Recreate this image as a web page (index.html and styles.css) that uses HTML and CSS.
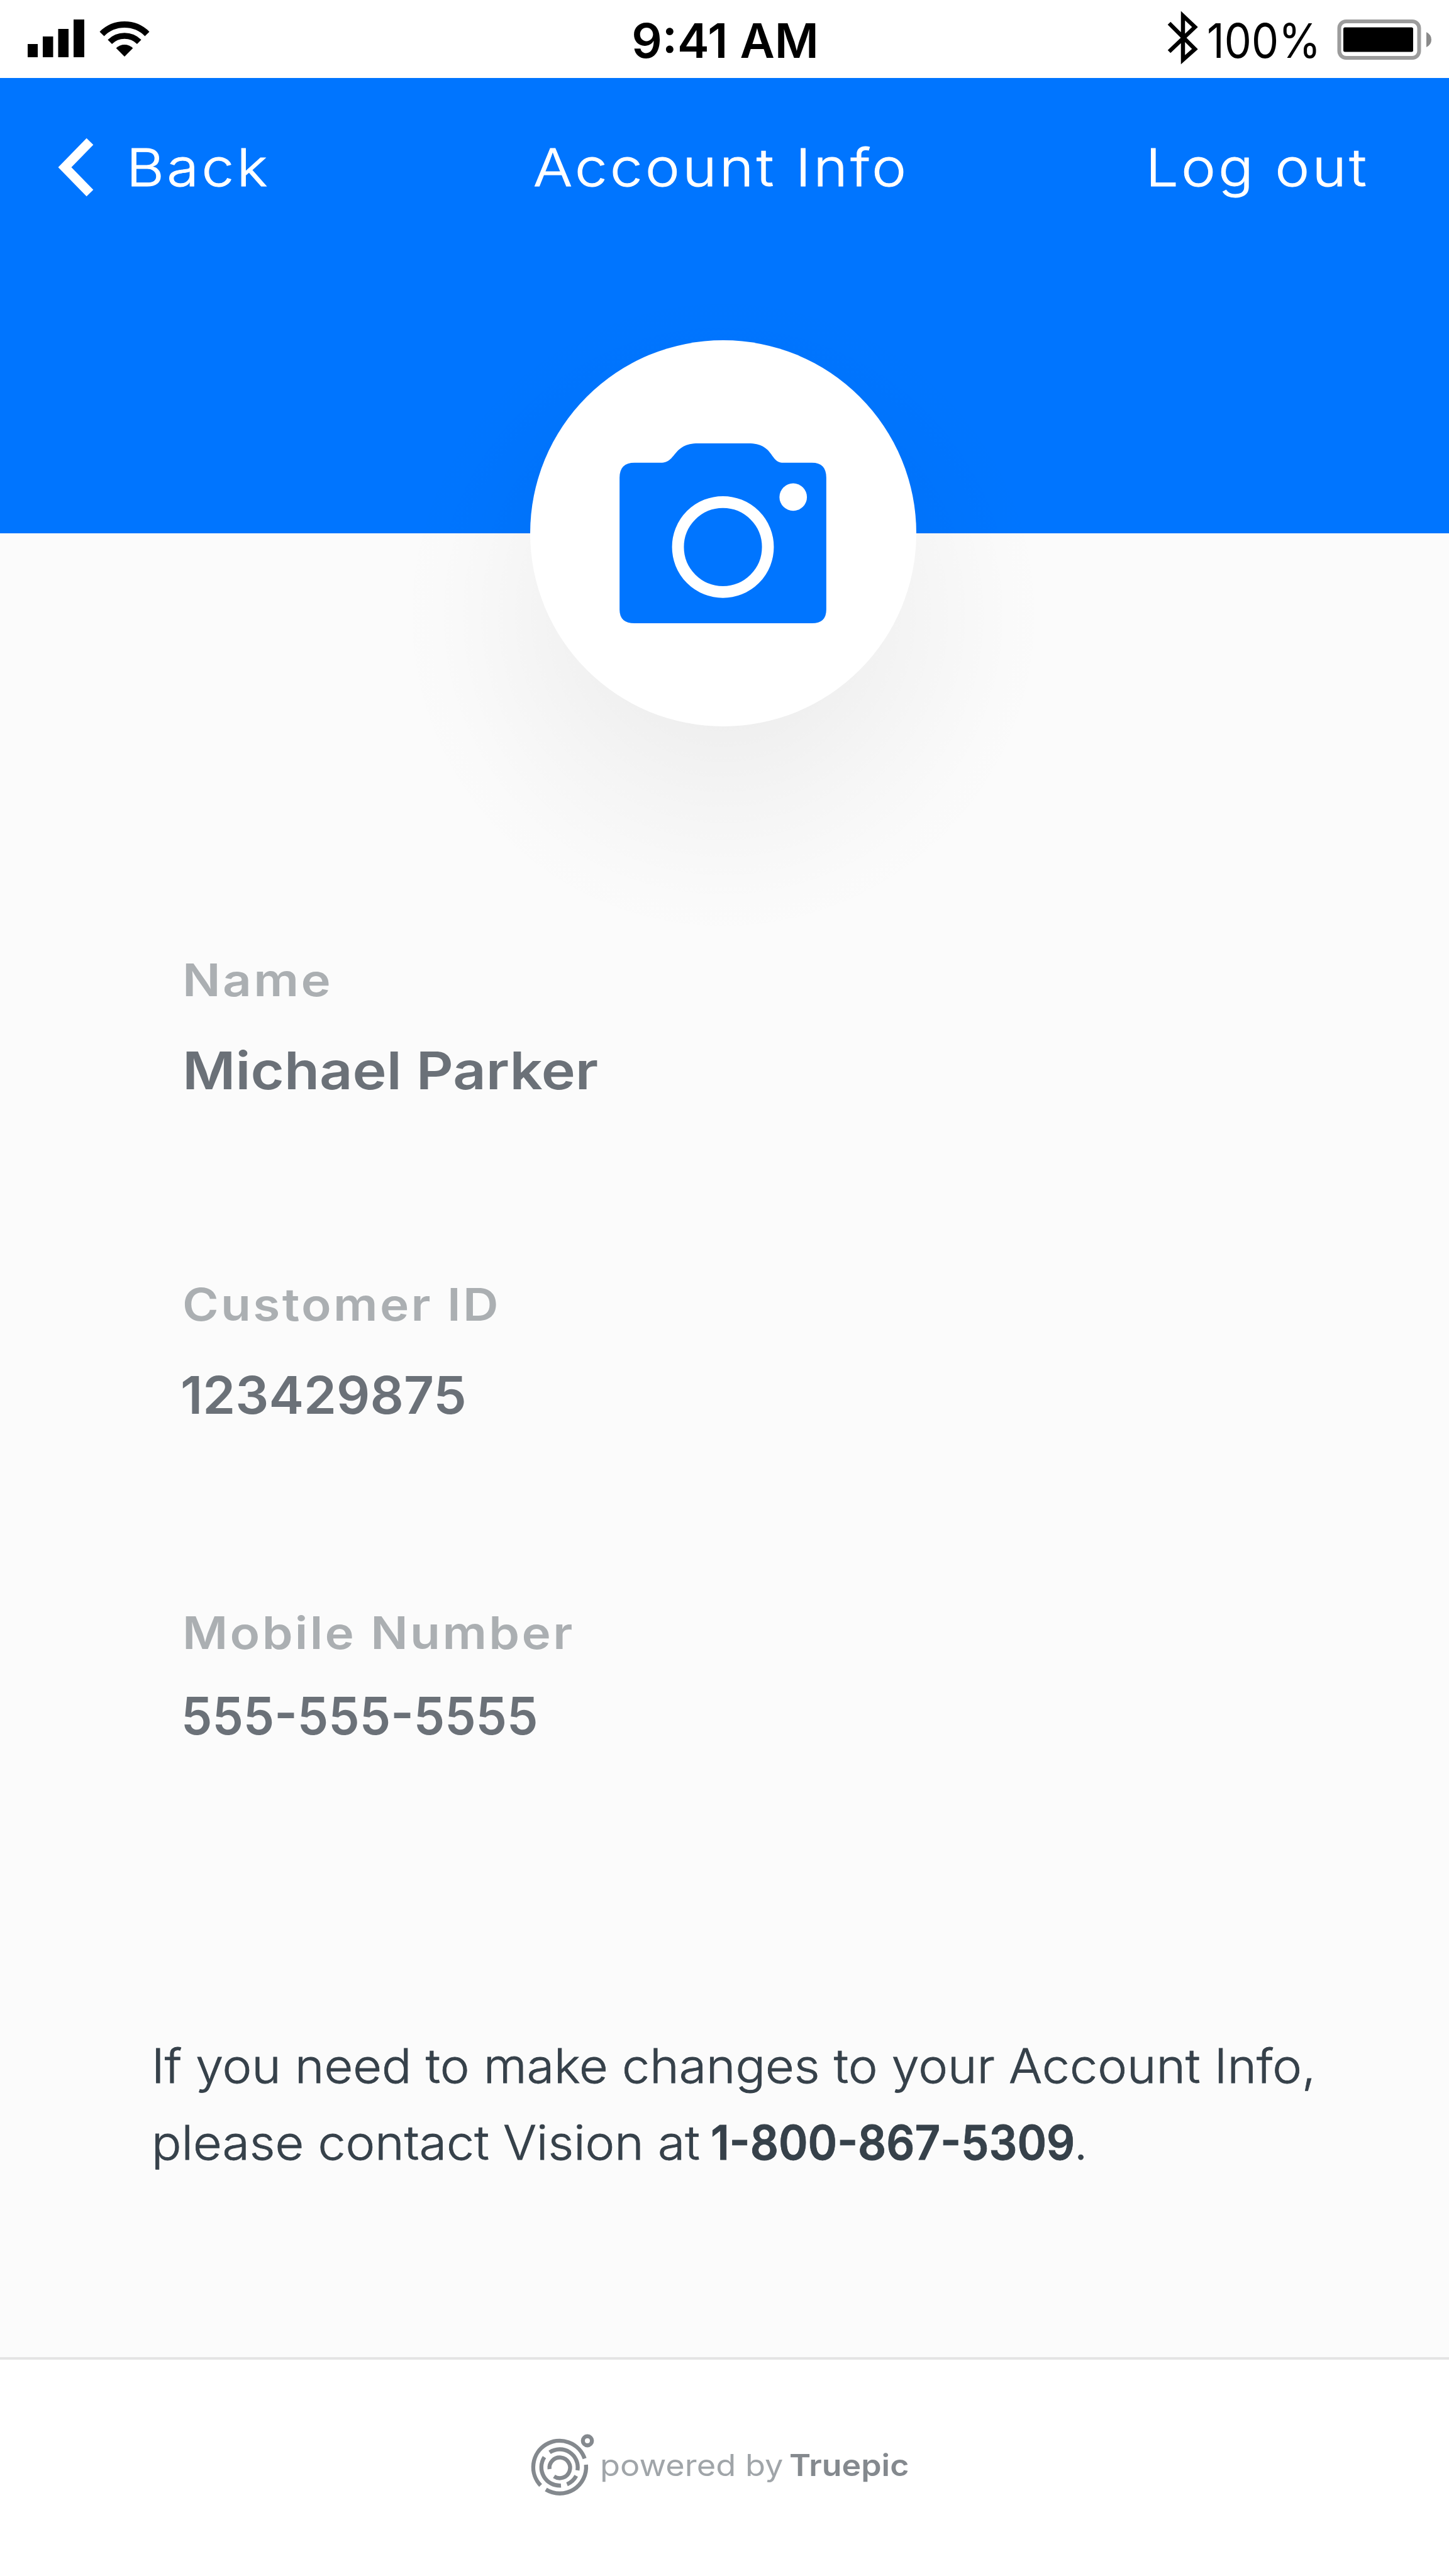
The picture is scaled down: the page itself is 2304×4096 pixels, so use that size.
FILE: index.html
```
<!DOCTYPE html>
<html lang="en">
<head>
<meta charset="utf-8">
<title>Account Info</title>
<link rel="stylesheet" href="styles.css">
</head>
<body>
<div class="screen">
  <div class="status-bar">
    <svg class="signal" viewBox="0 0 200 72" width="200" height="72">
      <path d="M0 46h16v21H0zM24 34h16.500v33H24zM48.500 22h16.500v45H48.500zM73 7h17v60H73z"/>
      <g fill="none" stroke="#000" stroke-width="10">
        <path d="M118 30A51 51 0 0 1 190 30"/>
        <path d="M130.700 42.700A33 33 0 0 1 177.300 42.700" stroke-width="9.500"/>
      </g>
      <path d="M154 66L140.600 52.600A19 19 0 0 1 167.400 52.600Z"/>
    </svg>
    <div class="time"><span class="fit fit-time">9:41 AM</span></div>
    <div class="power">
      <svg class="bluetooth" viewBox="0 0 50 88" width="50" height="88">
        <path d="M4 21L45 62L26 79V9L45 27L4 66" fill="none" stroke="#000" stroke-width="6.500"/>
      </svg>
      <span class="fit fit-percent">100%</span>
      <svg class="battery" viewBox="0 0 152 66" width="152" height="66">
        <rect x="5.500" y="3" width="127" height="58" rx="11" fill="none" stroke="#9c9c9c" stroke-width="6"/>
        <rect x="12" y="12.500" width="111" height="39" rx="2.500"/>
        <path d="M144 20Q152 24 152 32T144 44Z" fill="#8a8a8a"/>
      </svg>
    </div>
  </div>
  <header class="header">
    <nav class="nav">
      <a class="back">
        <svg viewBox="0 0 60 96" width="60" height="96"><path d="M52 7L12 48L52 89" fill="none" stroke="#fff" stroke-width="15"/></svg>
        <span class="fit fit-back">Back</span>
      </a>
      <h1 class="title"><span class="fit fit-title">Account Info</span></h1>
      <a class="logout"><span class="fit fit-logout">Log out</span></a>
    </nav>
    <div class="avatar">
      <svg viewBox="0 0 332 288" width="330" height="286">
        <path fill="#0075ff" d="M24 31H66C92 31 84 0 126 0H206C248 0 240 31 262 31H308Q331 31 331 55V266Q331 288 308 288H24Q0 288 0 266V55Q0 31 24 31Z"/>
        <circle cx="165.500" cy="166" r="72" fill="none" stroke="#fff" stroke-width="19"/>
        <circle cx="278" cy="86" r="22" fill="#fff"/>
      </svg>
    </div>
  </header>
  <main class="content">
    <dl class="fields">
      <div class="field"><dt><span class="fit fit-name-label">Name</span></dt><dd><span class="fit fit-name">Michael Parker</span></dd></div>
      <div class="field"><dt><span class="fit fit-id-label">Customer ID</span></dt><dd><span class="fit fit-id">123429875</span></dd></div>
      <div class="field field-phone"><dt><span class="fit fit-phone-label">Mobile Number</span></dt><dd><span class="fit fit-phone">555-555-5555</span></dd></div>
    </dl>
    <p class="help">
      <span class="line"><span class="fit fit-help">If you need to make changes to your Account Info,</span></span>
      <span class="line"><span class="fit fit-contact">please contact Vision at</span><b class="fit fit-number">1-800-867-5309</b><span>.</span></span>
    </p>
  </main>
  <footer class="footer">
    <svg class="logo" viewBox="0 0 600 600" width="120" height="120">
      <g fill="none" stroke="#84898e" stroke-width="32">
        <path d="M478 251A210 210 0 1 0 128 465"/>
        <path d="M489 300A210 210 0 0 1 170 498"/>
        <path d="M200 202A143 143 0 0 1 421 345"/>
        <path d="M158 240A146 146 0 0 0 290 466"/>
        <path d="M411 389A148 148 0 0 1 338 456"/>
        <path d="M199 335A82 82 0 1 1 235 393"/>
        <circle cx="500" cy="110" r="36"/>
      </g>
    </svg>
    <span class="fit fit-powered">powered by</span>
    <b class="fit fit-truepic">Truepic</b>
  </footer>
</div>
</body>
</html>
```
FILE: styles.css
```
* { box-sizing: border-box; }
body { margin: 0; background: #fbfbfb; font-family: Inter, "Liberation Sans", sans-serif; }
.screen { width: 2304px; height: 4096px; display: flex; flex-direction: column; overflow: hidden; }

/* Horizontal fitting of each text run */
.fit { display: inline-block; white-space: nowrap; transform-origin: left center; }
.fit-percent { width: 173px; transform: scaleX(.9); }
.fit-back, .fit-title { transform: scaleX(1.111); }
.fit-logout { transform: scaleX(1.11); transform-origin: right center; }
.fit-name-label { transform: scaleX(1.125); }
.fit-name, .fit-id-label, .fit-phone-label { transform: scaleX(1.104); }
.fit-id { margin-left: -3px; transform: scaleX(1.006); }
.fit-phone { margin-left: -2px; transform: scaleX(.947); }
.fit-help { transform: scaleX(1.053); }
.fit-contact { width: 889px; transform: scaleX(1.052); }
.fit-number { width: 578px; transform: scaleX(.942); }
.fit-powered { width: 301px; transform: scaleX(1.09); }
.fit-truepic { transform: scaleX(1.08); }

.status-bar { height: 124px; background: #fff; display: grid; grid-template-columns: 1fr 1fr 1fr; padding: 0 28px 0 44px; font-size: 76px; line-height: 128px; color: #000; }
.signal { margin-top: 24px; }
.time { text-align: center; font-weight: 600; padding-right: 14px; }
.power { display: flex; justify-content: flex-end; }
.bluetooth { margin: 16px 14px 0 0; }
.battery { margin: 31px 0 0 32px; }

.header { isolation: isolate; height: 724px; background: #0075ff; color: #fff; display: flex; flex-direction: column; align-items: center; }
.nav { flex: none; width: 100%; height: 284px; padding: 0 127px 0 91px; display: grid; grid-template-columns: 757px 1fr auto; align-items: center; font-size: 83px; font-weight: 300; letter-spacing: 4px; -webkit-text-stroke: 1px currentColor; }
.back { display: flex; align-items: center; gap: 50px; }
.title { margin: 0; font-size: inherit; font-weight: inherit; }
.avatar { position: relative; flex: none; width: 614px; height: 614px; margin: 133px 5px 0 0; border-radius: 50%; background: #fff; display: flex; justify-content: center; align-items: center; }
.avatar::before {
  content: "";
  position: absolute;
  z-index: -1;
  left: -233px;
  top: -103px;
  width: 1080px;
  height: 1080px;
  background: radial-gradient(circle, rgba(0,0,0,.058) 0, rgba(0,0,0,.048) 178px, rgba(0,0,0,.037) 250px, rgba(0,0,0,.025) 320px, rgba(0,0,0,.012) 400px, rgba(0,0,0,.005) 460px, rgba(0,0,0,0) 530px);
}

.content { flex: 1; }
.fields { margin: 0; padding: 660px 0 0 290px; }
.field { height: 516px; }
dt, dd { margin: 0; line-height: 100px; }
dt { font-size: 71px; font-weight: 600; color: #abafb2; letter-spacing: 3px; }
dd { font-size: 83px; font-weight: 600; color: #6b7178; margin-top: 44px; }
.field-phone { padding-top: 6px; }
.field-phone dd { margin-top: 32px; }
.help { margin: 168px 0 0 241px; font-size: 75px; line-height: 122px; color: #36414a; font-weight: 300; -webkit-text-stroke: .8px currentColor; }
.line { display: block; }
.help b { font-weight: 600; }

.footer { height: 348px; border-top: 4px solid #e4e4e4; background: #fff; display: flex; align-items: center; padding: 0 0 10px 834px; font-size: 48px; color: #a0a5a9; }
.footer b { color: #84898e; font-weight: 600; }
```
